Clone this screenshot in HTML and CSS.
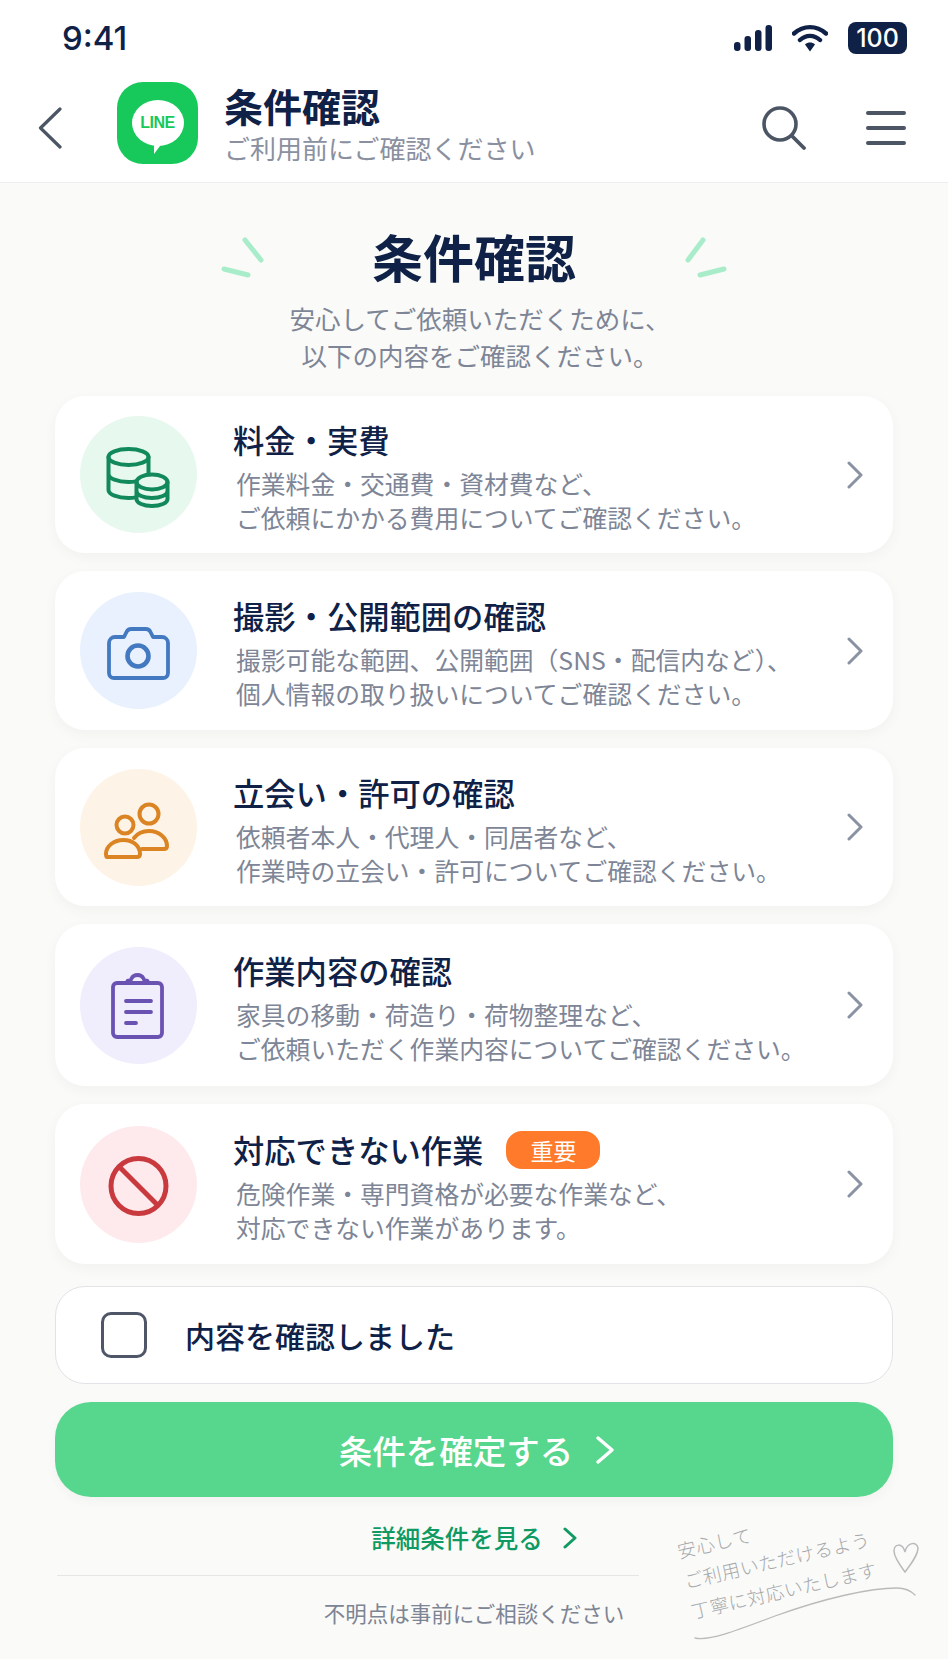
FILE: index.html
```html
<!DOCTYPE html>
<html lang="ja">

<head>
    <meta charset="UTF-8">
    <meta name="viewport" content="width=device-width, initial-scale=1.0">
    <title>条件確認</title>
    <link rel="stylesheet" href="styles.css">
</head>

<body>
    <div class="page">
        <div class="top">
            <div class="status">
                <span class="time">9:41</span>
                <div class="status-icons">
                    <svg width="38" height="28" viewBox="0 0 38 28">
                        <rect x="0" y="18" width="6.5" height="9" rx="3" fill="#0f2147" />
                        <rect x="10.5" y="12" width="6.5" height="15" rx="3" fill="#0f2147" />
                        <rect x="21" y="6" width="6.5" height="21" rx="3" fill="#0f2147" />
                        <rect x="31.5" y="1" width="6.5" height="26" rx="3" fill="#0f2147" />
                    </svg>
                    <svg width="36" height="28" viewBox="0 0 36 28">
                        <path d="M2 9.5c9.5-8.5 22.5-8.5 32 0M8 16c6-5.5 14-5.5 20 0" fill="none" stroke="#0f2147" stroke-width="4.4" stroke-linecap="round" />
                        <path d="M13 20.5c3-2.6 7-2.6 10 0L18 27.5z" fill="#0f2147" />
                    </svg>
                    <span class="battery">100</span>
                </div>
            </div>

            <header class="app-bar">
                <svg class="back" width="24" height="42" viewBox="0 0 24 42">
                    <path d="M22 2 2.5 21 22 40" fill="none" stroke="#4b5563" stroke-width="3.2" stroke-linecap="round" stroke-linejoin="round" />
                </svg>
                <div class="logo">
                    <div class="bubble">LINE</div>
                </div>
                <div class="app-title">
                    <h2>条件確認</h2>
                    <p>ご利用前にご確認ください</p>
                </div>
                <svg class="search" width="44" height="44" viewBox="0 0 44 44">
                    <circle cx="18" cy="18" r="16" fill="none" stroke="#4b5563" stroke-width="3.6" />
                    <path d="M30 30 42 42" stroke="#4b5563" stroke-width="3.8" stroke-linecap="round" />
                </svg>
                <div class="menu">
                    <span></span>
                    <span></span>
                    <span></span>
                </div>
            </header>
        </div>

        <main class="content">
            <div class="heading">
                <svg width="46" height="42" viewBox="0 0 46 42">
                    <path d="M25 3 41 23M4 32 28 38" stroke="#a8ecca" stroke-width="5" stroke-linecap="round" />
                </svg>
                <h1>条件確認</h1>
                <svg width="46" height="42" viewBox="0 0 46 42">
                    <path d="M21 3 6 23M18 38 42 32" stroke="#a8ecca" stroke-width="5" stroke-linecap="round" />
                </svg>
            </div>
            <p class="lead">安心してご依頼いただくために、<br>以下の内容をご確認ください。</p>

            <div class="cards">
                <div class="card">
                    <div class="circle green">
                        <svg width="117" height="117" viewBox="0 0 117 117" fill="none" stroke="#12895a" stroke-width="4" stroke-linecap="round" stroke-linejoin="round">
                            <ellipse cx="48.5" cy="41" rx="20" ry="8" />
                            <path d="M28.5 41v33c0 4.5 9 8 20 8 2.5 0 5-.2 7.5-.6M68.5 41v16M28.5 58c0 4.5 9 8 20 8 2.5 0 5-.2 7.5-.6" />
                            <ellipse cx="72" cy="66" rx="15.5" ry="7.5" />
                            <path d="M56.5 66v17c0 4 7 7 15.500 7s15.500-3 15.500-7V66M56.5 75c0 4 7 7 15.500 7s15.500-3 15.500-7" />
                        </svg>
                    </div>
                    <div class="card-text">
                        <h3>料金・実費</h3>
                        <p>作業料金・交通費・資材費など、<br>ご依頼にかかる費用についてご確認ください。</p>
                    </div>
                    <svg class="arrow" width="18" height="28" viewBox="0 0 18 28">
                        <path d="M3 2 15 14 3 26" fill="none" stroke="#8a93a3" stroke-width="3" stroke-linecap="round" stroke-linejoin="round" />
                    </svg>
                </div>

                <div class="card">
                    <div class="circle blue">
                        <svg width="117" height="117" viewBox="0 0 117 117" fill="none" stroke="#4379c1" stroke-width="3.8" stroke-linejoin="round">
                            <path d="M35 45h9l2.5-5c1-2 2.5-3 4.500-3h15c2 0 3.500 1 4.500 3l2.500 5h9a6 6 0 0 1 6 6v30a5 5 0 0 1-5 5H34a5 5 0 0 1-5-5V51a6 6 0 0 1 6-6z" />
                            <circle cx="58" cy="64" r="10.5" stroke-width="4.6" />
                        </svg>
                    </div>
                    <div class="card-text">
                        <h3>撮影・公開範囲の確認</h3>
                        <p>撮影可能な範囲、公開範囲（SNS・配信内など）、<br>個人情報の取り扱いについてご確認ください。</p>
                    </div>
                    <svg class="arrow" width="18" height="28" viewBox="0 0 18 28">
                        <path d="M3 2 15 14 3 26" fill="none" stroke="#8a93a3" stroke-width="3" stroke-linecap="round" stroke-linejoin="round" />
                    </svg>
                </div>

                <div class="card">
                    <div class="circle orange">
                        <svg width="117" height="117" viewBox="0 0 117 117" fill="none" stroke="#db8423" stroke-width="4" stroke-linecap="round" stroke-linejoin="round">
                            <circle cx="69" cy="45" r="9.5" />
                            <circle cx="45" cy="56" r="8.5" />
                            <path d="M27 88h30c2 0 3-1 3-3 0-8-7-14-16.500-14S26 77 26 85c0 2 0 3 1 3z" />
                            <path d="M54 69c3-4 9-7 15-7 10 0 18 7 18 15 0 2-1 3-3 3H62" />
                        </svg>
                    </div>
                    <div class="card-text">
                        <h3>立会い・許可の確認</h3>
                        <p>依頼者本人・代理人・同居者など、<br>作業時の立会い・許可についてご確認ください。</p>
                    </div>
                    <svg class="arrow" width="18" height="28" viewBox="0 0 18 28">
                        <path d="M3 2 15 14 3 26" fill="none" stroke="#8a93a3" stroke-width="3" stroke-linecap="round" stroke-linejoin="round" />
                    </svg>
                </div>

                <div class="card">
                    <div class="circle purple">
                        <svg width="117" height="117" viewBox="0 0 117 117" fill="none" stroke="#6a52b3" stroke-width="3.8" stroke-linecap="round" stroke-linejoin="round">
                            <path d="M47 36H37a4 4 0 0 0-4 4v46a4 4 0 0 0 4 4h41a4 4 0 0 0 4-4V40a4 4 0 0 0-4-4H68" />
                            <path d="M47 36c0-2 1-2.5 2.5-2.5 1 0 1.5-.5 2-2 1-2 3-3.5 6-3.5s5 1.5 6 3.5c.5 1.5 1 2 2 2 1.5 0 2.5.5 2.5 2.5z" />
                            <path d="M46 54h25M46 65h25M46 76h10" />
                        </svg>
                    </div>
                    <div class="card-text">
                        <h3>作業内容の確認</h3>
                        <p>家具の移動・荷造り・荷物整理など、<br>ご依頼いただく作業内容についてご確認ください。</p>
                    </div>
                    <svg class="arrow" width="18" height="28" viewBox="0 0 18 28">
                        <path d="M3 2 15 14 3 26" fill="none" stroke="#8a93a3" stroke-width="3" stroke-linecap="round" stroke-linejoin="round" />
                    </svg>
                </div>

                <div class="card">
                    <div class="circle red">
                        <svg width="117" height="117" viewBox="0 0 117 117" fill="none" stroke="#c93a3f" stroke-width="5">
                            <circle cx="58.5" cy="60" r="27.5" />
                            <path d="M39 40.5 78 79.5" />
                        </svg>
                    </div>
                    <div class="card-text">
                        <h3>対応できない作業 <span class="badge">重要</span></h3>
                        <p>危険作業・専門資格が必要な作業など、<br>対応できない作業があります。</p>
                    </div>
                    <svg class="arrow" width="18" height="28" viewBox="0 0 18 28">
                        <path d="M3 2 15 14 3 26" fill="none" stroke="#8a93a3" stroke-width="3" stroke-linecap="round" stroke-linejoin="round" />
                    </svg>
                </div>
            </div>

            <label class="check">
                <span class="box"></span>
                <span>内容を確認しました</span>
            </label>

            <button class="confirm">
                条件を確定する
                <svg width="20" height="28" viewBox="0 0 20 28">
                    <path d="M3 2 17 14 3 26" fill="none" stroke="#ffffff" stroke-width="3.4" stroke-linecap="round" stroke-linejoin="round" />
                </svg>
            </button>

            <a class="more">
                詳細条件を見る
                <svg width="14" height="22" viewBox="0 0 14 22">
                    <path d="M2 2 12 11 2 20" fill="none" stroke="#0e9a62" stroke-width="3" stroke-linecap="round" stroke-linejoin="round" />
                </svg>
            </a>
            <hr>
            <p class="notice">不明点は事前にご相談ください</p>
        </main>

        <!-- handwritten note over the corner -->
        <div class="note">
            <div>安心して</div>
            <div>ご利用いただけるよう</div>
            <div>丁寧に対応いたします</div>
        </div>
        <svg class="note-line" width="240" height="110" viewBox="0 0 240 110" fill="none" stroke="#b9bbbb" stroke-width="1.3" stroke-linecap="round">
            <path d="M7 100c14 3 38-6 80-22 50-18 95-28 122-28 8 0 14 3 18 7" />
            <path d="M217 34c-6-8-11-15-11-21 0-7 8-9 11 1 2-10 12-11 13-4 0 7-7 16-13 24z" stroke-width="1.5" />
        </svg>
    </div>
</body>

</html>
```

FILE: styles.css
```css
* {
    box-sizing: border-box;
}

body {
    margin: 0;
    padding: 0;
    font-family: "Noto Sans CJK JP", "Noto Sans", sans-serif;
    background-color: #fafaf8;
    color: #0f2147;
}

h1,
h2,
h3,
p {
    margin: 0;
}

.page {
    position: relative;
    width: 948px;
    height: 1659px;
    overflow: hidden;
}

/* top bar */
.top {
    height: 183px;
    background-color: #ffffff;
    border-bottom: 1px solid #eeeeee;
}

.status {
    display: flex;
    justify-content: space-between;
    align-items: center;
    height: 74px;
    padding: 2px 41px 0 62px;
}

.time {
    font-family: Inter, sans-serif;
    font-size: 33px;
    font-weight: 500;
}

.status-icons {
    display: flex;
    align-items: center;
    gap: 20px;
}

.battery {
    width: 59px;
    height: 32px;
    border-radius: 8px;
    background-color: #0f2147;
    color: white;
    font-family: Inter, sans-serif;
    font-size: 25px;
    font-weight: 500;
    line-height: 32px;
    text-align: center;
}

.app-bar {
    display: flex;
    align-items: center;
    height: 108px;
    padding: 0 42px 0 38px;
}

.back {
    margin-right: 55px;
}

.logo {
    display: flex;
    align-items: center;
    justify-content: center;
    width: 81px;
    height: 82px;
    margin-bottom: 10px;
    border-radius: 26px;
    background-color: #17c95a;
}

.bubble {
    position: relative;
    width: 52px;
    height: 46px;
    border-radius: 50%;
    background-color: white;
    color: #17c95a;
    font-family: "Liberation Sans", sans-serif;
    font-size: 16px;
    font-weight: 700;
    letter-spacing: -0.5px;
    line-height: 46px;
    text-align: center;
}

.bubble::after {
    content: "";
    position: absolute;
    left: 22px;
    bottom: -8px;
    border-top: 12px solid white;
    border-right: 9px solid transparent;
}

.app-title {
    margin: 0 0 10px 26px;
}

.app-title h2 {
    font-size: 39px;
    font-weight: 700;
    line-height: 46px;
}

.app-title p {
    margin-top: 3px;
    color: #8a90a0;
    font-size: 26px;
    font-weight: 400;
    line-height: 34px;
}

.search {
    margin-left: auto;
}

.menu {
    display: flex;
    flex-direction: column;
    gap: 11px;
    width: 40px;
    margin-left: 60px;
}

.menu span {
    height: 4px;
    border-radius: 2px;
    background-color: #4b5563;
}

/* content */
.content {
    padding: 43px 55px 0;
}

.heading {
    display: flex;
    justify-content: center;
    align-items: center;
    gap: 106px;
    height: 60px;
}

.heading svg {
    margin-top: 3px;
}

.heading h1 {
    font-size: 51px;
    font-weight: 700;
    line-height: 60px;
}

.lead {
    margin: 13px 0 23px;
    padding-left: 12px;
    color: #7d8596;
    font-size: 25.5px;
    line-height: 37px;
    text-align: center;
}

.cards {
    display: flex;
    flex-direction: column;
    gap: 18px;
}

.card {
    display: flex;
    align-items: center;
    height: 158px;
    padding: 0 29px 0 25px;
    border-radius: 30px;
    background-color: white;
    box-shadow: 0 4px 14px rgba(0, 0, 0, 0.04);
}

.card:nth-child(1) {
    height: 157px;
}

.card:nth-child(2) {
    height: 159px;
}

.card:nth-child(4) {
    height: 162px;
}

.card:nth-child(5) {
    height: 160px;
}

.circle {
    flex: none;
    width: 117px;
    height: 117px;
    border-radius: 50%;
}

.green {
    background-color: #e7f8ef;
}

.blue {
    background-color: #e8f1fd;
}

.orange {
    background-color: #fef3e7;
}

.purple {
    background-color: #f0edfd;
}

.red {
    background-color: #feeaed;
}

.card-text {
    padding-top: 5px;
    margin-left: 36px;
}

.card-text h3 {
    display: flex;
    align-items: center;
    margin-bottom: 6px;
    font-size: 31.3px;
    font-weight: 500;
    line-height: 40px;
}

.card-text p {
    margin-left: 3px;
    color: #7d8596;
    font-size: 24.8px;
    line-height: 34px;
}

.badge {
    width: 94px;
    height: 38px;
    margin-left: 23px;
    border-radius: 16px;
    background-color: #ff7a2a;
    color: white;
    font-size: 23px;
    font-weight: 400;
    line-height: 38px;
    text-align: center;
}

.arrow {
    margin-left: auto;
}

.check {
    display: flex;
    align-items: center;
    gap: 38px;
    height: 98px;
    margin-top: 22px;
    padding-left: 45px;
    border: 1px solid #e2e3e6;
    border-radius: 30px;
    background-color: white;
    font-size: 30px;
    font-weight: 500;
}

.box {
    width: 46px;
    height: 46px;
    border: 3.5px solid #4f5668;
    border-radius: 10px;
}

.confirm {
    display: flex;
    justify-content: center;
    align-items: center;
    gap: 22px;
    width: 100%;
    height: 95px;
    margin-top: 18px;
    padding: 0 0 0 6px;
    border: none;
    border-radius: 36px;
    background-color: #57d68d;
    color: white;
    font-family: inherit;
    font-size: 33.5px;
    font-weight: 500;
    box-shadow: 0 4px 12px rgba(0, 0, 0, 0.04);
}

.more {
    display: flex;
    justify-content: center;
    align-items: center;
    gap: 20px;
    margin-top: 23px;
    color: #0e9a62;
    font-size: 24.5px;
    font-weight: 500;
    line-height: 36px;
}

hr {
    width: 582px;
    height: 1px;
    margin: 19px 0 0 2px;
    border: none;
    background-color: #e6e6e6;
}

.notice {
    margin-top: 22px;
    color: #7d8494;
    font-size: 21.5px;
    line-height: 30px;
    text-align: center;
}

/* note */
.note {
    position: absolute;
    left: 674px;
    top: 1536px;
    color: #a6a9ab;
    font-size: 18.5px;
    font-weight: 300;
    line-height: 31px;
    letter-spacing: 0.5px;
    transform: rotate(-13deg);
    transform-origin: left top;
}

.note-line {
    position: absolute;
    left: 688px;
    top: 1538px;
}
```
